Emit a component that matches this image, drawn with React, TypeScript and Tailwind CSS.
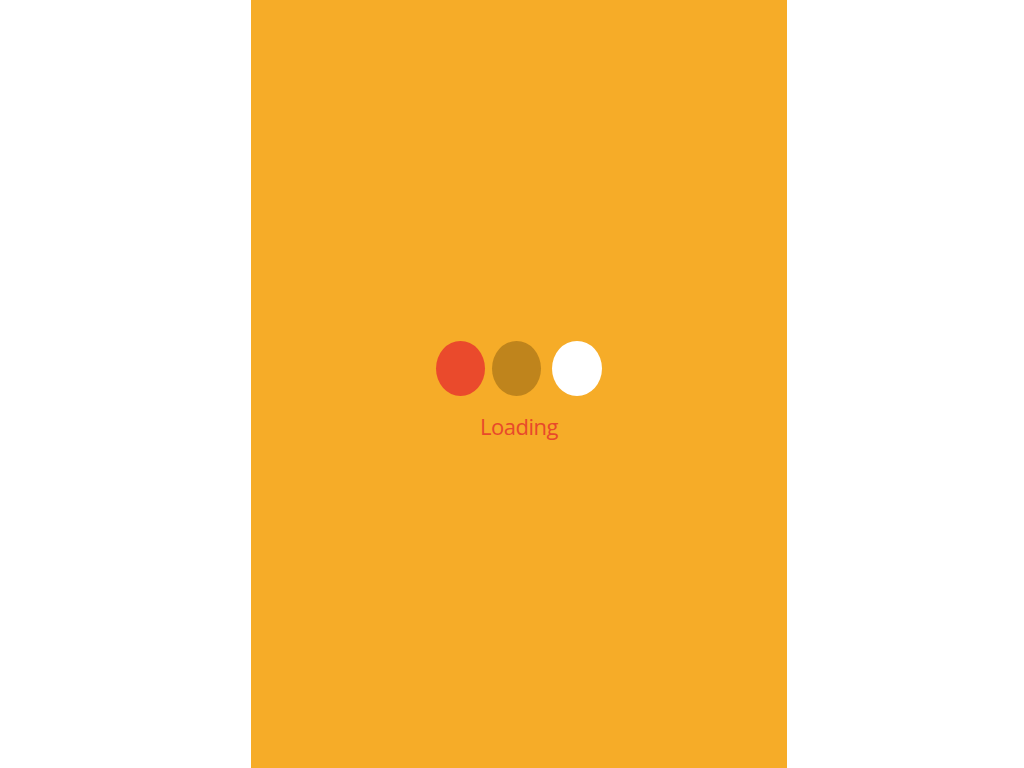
export default function App() {
  return (
    <div className="min-h-[768px] w-full bg-white">
      <main className="ml-[251px] flex h-[768px] w-[536px] flex-col items-center bg-[#f6ac28] pt-[341px]">
        <div className="flex items-center">
          <span className="h-[55px] w-[49px] rounded-[50%] bg-[#ea4a2c]" />
          <span className="ml-[7px] h-[55px] w-[49px] rounded-[50%] bg-[#bf841c]" />
          <span className="ml-[11px] h-[55px] w-[50px] rounded-[50%] bg-white" />
        </div>
        <p className="mt-[16px] font-['Open_Sans',sans-serif] text-[22px] leading-[28px] tracking-[-0.5px] text-[#e8492b]">
          Loading
        </p>
      </main>
    </div>
  )
}
